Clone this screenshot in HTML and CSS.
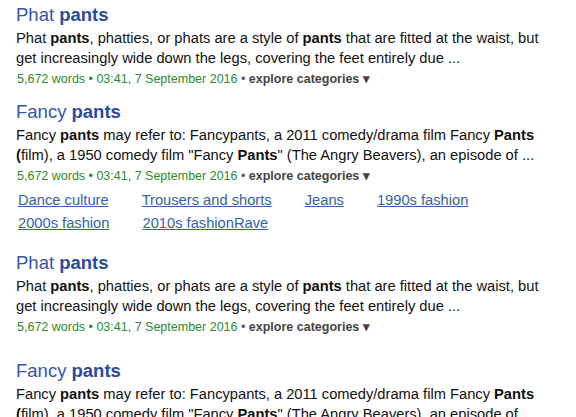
FILE: index.html
```html
<!DOCTYPE html>
<html>
<head>
<meta charset="utf-8">
<link rel="stylesheet" href="styles.css">
</head>
<body>
<div class="results">
  <div class="result first">
    <a class="title">Phat <b>pants</b></a>
    <p class="snippet">Phat <b>pants</b>, phatties, or phats are a style of <b>pants</b> that are fitted at the waist, but get increasingly wide down the legs, covering the feet entirely due ...</p>
    <div class="meta"><span class="info">5,672 words • 03:41, 7 September 2016</span> • <span class="explore">explore categories ▾</span></div>
  </div>
  <div class="result with-cats">
    <a class="title">Fancy <b>pants</b></a>
    <p class="snippet">Fancy <b>pants</b> may refer to: Fancypants, a 2011 comedy/drama film Fancy <b>Pants</b> <b>(</b>film), a 1950 comedy film "Fancy <b>Pants</b>" (The Angry Beavers), an episode of ...</p>
    <div class="meta"><span class="info">5,672 words • 03:41, 7 September 2016</span> • <span class="explore">explore categories ▾</span></div>
    <div class="cats">
      <a>Dance culture</a>
      <a>Trousers and shorts</a>
      <a>Jeans</a>
      <a>1990s fashion</a>
      <a>2000s fashion</a>
      <a>2010s fashionRave</a>
    </div>
  </div>
  <div class="result third">
    <a class="title">Phat <b>pants</b></a>
    <p class="snippet">Phat <b>pants</b>, phatties, or phats are a style of <b>pants</b> that are fitted at the waist, but get increasingly wide down the legs, covering the feet entirely due ...</p>
    <div class="meta"><span class="info">5,672 words • 03:41, 7 September 2016</span> • <span class="explore">explore categories ▾</span></div>
  </div>
  <div class="result">
    <a class="title">Fancy <b>pants</b></a>
    <p class="snippet">Fancy <b>pants</b> may refer to: Fancypants, a 2011 comedy/drama film Fancy <b>Pants</b> <b>(</b>film), a 1950 comedy film "Fancy <b>Pants</b>" (The Angry Beavers), an episode of ...</p>
    <div class="meta"><span class="info">5,672 words • 03:41, 7 September 2016</span> • <span class="explore">explore categories ▾</span></div>
  </div>
</div>
</body>
</html>
```
FILE: styles.css
```css
html, body {
  margin: 0;
  padding: 0;
  background: #fff;
  overflow: hidden;
}
body {
  font-family: "Liberation Sans", Arial, sans-serif;
  color: #111;
}
.results {
  padding: 4px 28px 0 16px;
  display: flex;
  flex-direction: column;
}
.result {
  display: flex;
  flex-direction: column;
  margin-bottom: 22px;
}
.result.first {
  margin-bottom: 12px;
}
.result.with-cats {
  margin-bottom: 19px;
}
.result.third {
  margin-bottom: 23px;
}
.title {
  font-size: 18.5px;
  line-height: 22px;
  color: #3656a8;
}
.title b {
  color: #2b4a9c;
}
.snippet {
  margin: 2px 0 0 0;
  font-size: 14.7px;
  line-height: 20px;
  color: #111;
}
.meta {
  margin-top: 1px;
  font-size: 12.5px;
  line-height: 20px;
  color: #555;
  padding-left: 1px;
}
.info {
  color: #2c8a2c;
}
.explore {
  color: #444;
  font-weight: bold;
}
.cats {
  display: flex;
  flex-wrap: wrap;
  column-gap: 33px;
  row-gap: 3px;
  padding: 4px 0 0 2px;
  font-size: 14.7px;
  line-height: 20px;
}
.cats a {
  color: #3461b0;
  text-decoration: underline;
}
```
